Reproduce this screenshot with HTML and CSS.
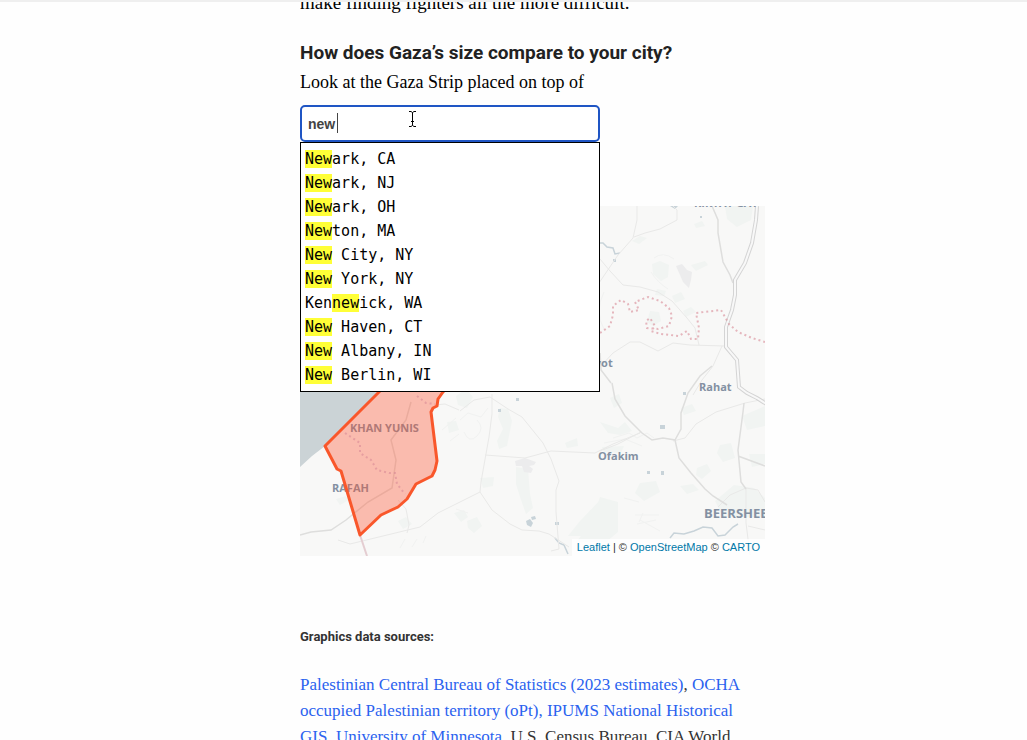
FILE: index.html
```
<!DOCTYPE html>
<html lang="en">
<head>
<meta charset="utf-8">
<meta name="viewport" content="width=device-width, initial-scale=1">
<title>How does Gaza’s size compare to your city?</title>
<link rel="stylesheet" href="styles.css">
</head>
<body>
<header class="topbar"></header>
<main class="page">
<article class="story">
  <div class="story-tail"><p>make finding fighters all the more difficult.</p></div>
  <h2 class="title">How does Gaza’s size compare to your city?</h2>
  <label class="lead" for="city">Look at the Gaza Strip placed on top of</label>
  <div class="search">
    <input class="search-input" id="city" type="text" value="new " autocomplete="off">
    <span class="caret"></span>
    <svg class="pointer" width="9" height="16" viewBox="0 0 9 16" fill="none" stroke="#000" stroke-width="1"><path d="M1 .5h2l1.500 1 1.500-1h2M4.500 1.500v13M1 15.500h2l1.500-1 1.500 1h2M3 10.500h3"/></svg>
    <ul class="options">
      <li><mark>New</mark>ark, CA</li>
      <li><mark>New</mark>ark, NJ</li>
      <li><mark>New</mark>ark, OH</li>
      <li><mark>New</mark>ton, MA</li>
      <li><mark>New</mark> City, NY</li>
      <li><mark>New</mark> York, NY</li>
      <li>Ken<mark>new</mark>ick, WA</li>
      <li><mark>New</mark> Haven, CT</li>
      <li><mark>New</mark> Albany, IN</li>
      <li><mark>New</mark> Berlin, WI</li>
    </ul>
  </div>
  <div class="map">
    <svg class="map-art" viewBox="300 206 465 350" role="img" aria-label="Map of the Gaza Strip">
      <rect class="land" x="300" y="206" width="465" height="350"/>
      <g class="park">
        <path d="M725 206h28l-2 14-14 7-10-8zM652 264l8-3 9 4-1 12-7 4-8-7zM632 241l8-5 7 2-8 6zM691 265l14-4 3 4-12 6zM672 296l9-4 4 7-10 4zM683 311l8-4 5 5-10 5zM650 311l9 1 2 9-8 5-6-4zM657 289l9 2-2 5-9-1zM694 224l8-3 3 5-9 2z"/>
        <path d="M600 497l18 5 0 30-12 10h-30l14-17zM580 521l22-23 16 4-13 34h-37zM640 483l16-2 4 11-16 9-9-8zM500 408l8 1 4 12-5 25-8 3-2-8 6-12-5-12zM516 467l12 2 2 25 3 14-7 6-6-17-4-13zM480 478l14-1-1 9-10 2zM467 521l10-4 5 9-8 7-6-5zM456 396l10-7 7 8-6 11-9-3zM565 443l12-5 1 8-11 2zM734 485l20 3 11 10v19h-42l-8-16zM742 416l23-10v20l-18 4z"/>
        <path d="M720 445l11-2 4 15-12 4-6-9zM697 468l10-4 4 7-9 8-6-4zM610 398l9-4 3 9-8 5zM600 422l18 6 7-6 7 9-12 4-12-2zM454 513l10-3 4 7-7 5zM447 422l9-1 3 9-10 3zM749 454h16v10l-13 3zM602 447l22-1-3 7-17-1zM398 521l8-4 6 7-9 5zM336 499l10-3 3 4-9 5zM681 408l11-4 4 7-12 4zM680 486l13-2 6 6-12 4z"/>
      </g>
      <g class="urban"><path d="M676 266l6-2 5 6 5 2-1 8-2 8-6-6-3-7zM515 461l10-3 11 4-2 3-5 1 4 3-2 4-7-1-2-6-6 0z"/></g>
      <g class="contours">
        <path d="M604 292q-10 20 0 37M654 258q9-7 20 1M651 272q6 10 17 17M613 438l16-5 8 5 10-5 7 5M604 443l21-4 17 7M460 420l8-7 13 4 7-9M464 432q5 12 13 4t0-16M442 430l14-12M456 509l12 4M450 441l9-7M635 515l24 0M640 520l20 11M637 524l19-4M643 513l-4 9M400 548l5-9M412 547l5-8M423 543l3-7M624 498l15 4M615 551l18 2"/>
      </g>
      <path class="sea" d="M300 206h190L380 391 325 446 312 456 300 467z"/>
      <g class="water">
        <path d="M670 206h8l-3 3zM526 521l4-2 3 4-2 4-4-2zM531 517l4-1 1 3-4 1zM555 522h4v3h-4zM660 425h5v4h-5zM516 398h3v3h-3zM498 409h3v3h-3zM613 259h3v3h-3zM647 471h3v3h-3zM661 471h3v4h-3zM700 216h2v2h-2zM683 392h3v3h-3z"/>
        <path class="stream" d="M598 243h5l4 4 6 1 2 6 5-1M555 538l4 5 5 2 4 9M670 538l4-5 10 1 10-3 9-4 9 1 6 8 7-1 8-8 5-3"/>
      </g>
      <g class="road">
        <path d="M637 206v14l-4 18-15 17-19 28M634 237l11-4 15-4 17-9v-10l-4-4M600 259l10 12 13 14 17 2 18 5 14 9 15 17 8 10 4 17M600 367l13-14 17-11h10l18 9 15-8 17 2 35 1M722 346l-9 20-11 14-9 15"/>
        <path d="M460 411l14-11 16-3 18 12 14 8 21 26 8 16 8 22-3 9v22l3 37-8 2M492 394v20l-3 23-8 45-1 10 12 18 18 14 12 6 17 1 10 3 20 13M485 455l40 3 26-7 44 2 18-9 27-11M480 492l-24 12-18 9-18 14-70 17-12-4M398 500l8 9 3 16-2 8M435 405l10-1 14 6M673 441l12-3 11-14 20-12 29-9 20-4M600 451l18-7 23-12M718 507l12-12 16-7 12 2 7 12M746 488v35l4 32M748 526l17 4"/>
      </g>
      <path class="road-main" d="M712 206l6 14v13l5 29 7 13 3 8M612 383l3 16 10 17 17 17 10 7 11-2 12 2 4 18 12 15 14 16 8 7 14 9M675 440l6-11v-16l7-20 12-17 12-10M744 403l-1 9-5 38 3 32 5 7M738 456l27 10M600 353l1 17 10 13M300 535l11-3 20-2 15-10 22-18 24-14 4-28-5-20 15-20 5-18"/>
      <path class="highway" d="M757 206l-1 14-4 23-7 20-10 17v15l-3 15-6 17v20l11 13 2 27 8 6 10 5 14 9"/>
      <path class="highway-core" d="M757 206l-1 14-4 23-7 20-10 17v15l-3 15-6 17v20l11 13 2 27 8 6 10 5 14 9"/>
      <path class="border" d="M600 333l10-7 3-11v-9l8-6 7 4 2 8 9-2-4-8 13-5 12 4 9 7 3 8-3 10-11 3-11-1-1-7 4-3 5 8-4 5 10 3 18 2 8-5 4 8h7l1-11-3-15 25-3 8 14 9 8 14 6 13 4"/>
      <path class="border-line" d="M360 535l7 21"/>
      <g class="label">
        <text x="350" y="432">KHAN YUNIS</text>
        <text x="332" y="492">RAFAH</text>
        <text x="588" y="367">ovot</text>
        <text x="699" y="391">Rahat</text>
        <text x="598" y="460">Ofakim</text>
        <text x="694" y="207">KIRYAT GAT</text>
        <text class="label-city" x="704" y="518">BEERSHEBA</text>
      </g>
      <path class="gaza" d="M490 281L380 391 330 441 325 446 337 469 341 471 360 535 381 515 398 507 407 499 416 484 432 476 435 470 437 461 431 412 433 408 437 406 438 399 443 392 510 325z"/>
      <path class="border" d="M345 433l15 10v10l11 7 6 10 12 3h6l2 11 8 10M417 396l9 7 9 1"/>
    </svg>
    <div class="attribution"><a href="#">Leaflet</a> | © <a href="#">OpenStreetMap</a> © <a href="#">CARTO</a></div>
  </div>
  <h3 class="sources-title">Graphics data sources:</h3>
  <p class="sources"><a href="#">Palestinian Central Bureau of Statistics (2023 estimates)</a>, <a href="#">OCHA<br>occupied Palestinian territory (oPt), </a><a href="#">IPUMS National Historical<br>GIS, University of Minnesota</a>, U.S. Census Bureau, CIA World</p>
</article>
</main>
</body>
</html>
```
FILE: styles.css
```
* { box-sizing: border-box; }
body {
  margin: 0;
  height: 100vh;
  overflow: hidden;
  background: #fefefe;
  color: #000;
  font-family: "Liberation Serif", serif;
}
.topbar { height: 2px; background: #efefef; }
.page {
  display: grid;
  grid-template-columns: minmax(0, 300fr) minmax(0, 465px) minmax(0, 262fr);
}
.story { grid-column: 2; }
.story-tail {
  display: flex;
  align-items: flex-end;
  height: 14px;
  overflow: hidden;
}
.story-tail p { margin: 0; font-size: 19px; line-height: 26px; white-space: nowrap; }
.title {
  margin: 24px 0 0;
  font: bold 19px/26px "Roboto", sans-serif;
  color: #222;
}
.lead { display: block; padding-top: 3px; font-size: 18px; line-height: 26px; }
.search { position: relative; max-width: 300px; margin: 10px 0 64px; }
.search-input {
  display: block;
  width: 100%;
  height: 37px;
  padding: 0 6px;
  border: 2px solid #1f55c4;
  border-radius: 5px;
  outline: 0;
  background: #fff;
  font: bold 14px "Liberation Sans", sans-serif;
  color: #444;
}
.caret { position: absolute; left: 37px; top: 8px; width: 1px; height: 20px; background: #444; }
.pointer { position: absolute; left: 108px; top: 6px; }
.options {
  position: absolute;
  z-index: 2;
  top: 100%;
  left: 0;
  right: 0;
  margin: 0;
  padding: 4px;
  border: 1px solid #000;
  background: #fff;
  list-style: none;
  font: 15px/24px "DejaVu Sans Mono", monospace;
}
.options mark { background: #ffff37; color: #000; }
.map { position: relative; overflow: hidden; }
.map-art { display: block; width: 100%; }
.land { fill: #f8f8f7; }
.park { fill: #f1f4f2; }
.urban { fill: #ececed; }
.sea { fill: #cbd3d6; }
.water { fill: #c8d3d9; }
.stream { fill: none; stroke: #c8d3d9; stroke-width: 1.500; }
.contours { fill: none; stroke: #f1f2f1; }
.road { fill: none; stroke: #e9e9e8; }
.road-main { fill: none; stroke: #dededd; stroke-width: 1.500; }
.highway { fill: none; stroke: #d4d4d4; stroke-width: 4; }
.highway-core { fill: none; stroke: #f8f8f8; stroke-width: 2; }
.border { fill: none; stroke: #d98b96; stroke-opacity: .6; stroke-width: 2; stroke-dasharray: 2 3; }
.border-line { fill: none; stroke: #e4cdd1; stroke-width: 2; }
.gaza { fill: #ff4f2b; fill-opacity: .36; stroke: #f9572b; stroke-width: 3; stroke-linejoin: round; }
.label { font: bold 11px "Open Sans", sans-serif; fill: #8390a2; }
.label-city { font-size: 13px; }
.attribution {
  position: absolute;
  right: 0;
  bottom: 0;
  padding: 0 5px;
  background: rgba(255, 255, 255, .8);
  font: 11px/17px "Liberation Sans", sans-serif;
  color: #333;
}
.attribution a { color: #0078a8; text-decoration: none; }
.sources-title {
  margin: 72px 0 0;
  font: bold 13px/18px "Roboto", sans-serif;
  color: #333;
}
.sources { margin: 26px 0 0; font-size: 17px; line-height: 26px; color: #333; white-space: nowrap; }
.sources a { color: #2b62ef; text-decoration: none; }
```
